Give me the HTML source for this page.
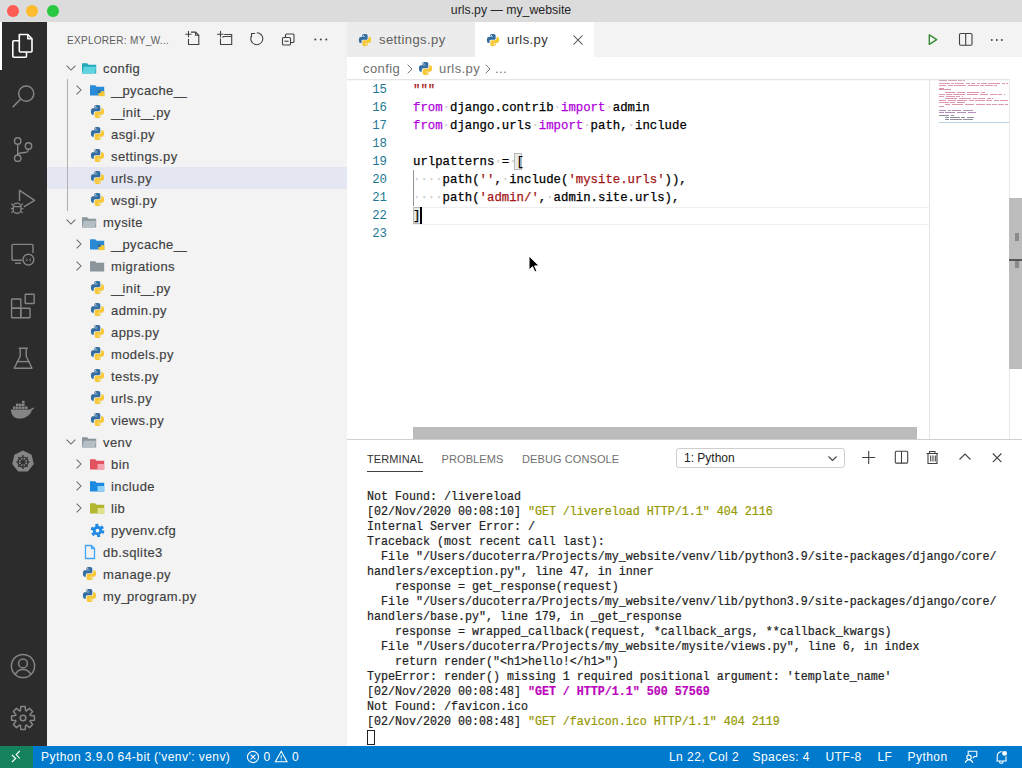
<!DOCTYPE html>
<html><head><meta charset="utf-8">
<style>
*{margin:0;padding:0;box-sizing:border-box}
html,body{width:1022px;height:768px;overflow:hidden;font-family:"Liberation Sans",sans-serif;background:#fff;position:relative}
div{position:absolute}
svg{position:absolute;overflow:visible}
.t{white-space:pre}
#title{left:0;top:0;width:1022px;height:22px;background:#dcdcdc}
#title .tx{left:0;width:1022px;top:3px;text-align:center;font-size:12.3px;color:#262626}
.light{width:11.6px;height:11.6px;border-radius:50%;top:5.2px}
#act{left:0;top:22px;width:47px;height:724px;background:#2c2c2c}
#side{left:47px;top:22px;width:300px;height:724px;background:#f3f3f3}
#editor{left:347px;top:22px;width:675px;height:417px;background:#fff}
#tabs{left:0;top:0;width:675px;height:35px;background:#f3f3f3}
#panel{left:347px;top:439px;width:675px;height:307px;background:#fff;border-top:1px solid #d0d0d0}
#status{left:0;top:746px;width:1022px;height:22px;background:#007acc;color:#fff;font-size:12px}
.row{left:0;width:300px;height:22px;font-size:13px;color:#3f3f3f;letter-spacing:.4px;-webkit-text-stroke:.15px}
.u{letter-spacing:-1.5px}
.lbl{top:4px;white-space:pre}
.code{-webkit-text-stroke:.25px;font-family:"Liberation Mono",monospace;font-size:12.33px;white-space:pre;color:#000;line-height:18px;height:18px}
.ln{font-family:"Liberation Mono",monospace;font-size:12.33px;white-space:pre;color:#237893;line-height:18px;height:18px;text-align:right;width:40px}
.term{-webkit-text-stroke:.2px;font-family:"Liberation Mono",monospace;font-size:11.67px;white-space:pre;color:#222;line-height:15px;height:15px;transform:scaleY(1.15);transform-origin:0 50%}
.kw{color:#af00db}.str{color:#a31515}
.ws{color:#d0d0d0}
.yl{color:#949800}.mg{color:#bc05bc;font-weight:bold}
.tab{font-size:13px;letter-spacing:.4px}
.bc{font-size:13px;color:#6f6f6f;letter-spacing:.4px}
.ptab{font-size:11px;letter-spacing:.1px}
.sb{top:4px;white-space:pre;letter-spacing:.45px}
</style></head><body>
<svg width="0" height="0" style="position:absolute"><defs><symbol id="py" viewBox="0 0 16 16"><path fill="#346ea0" d="M7.9 1C4.4 1 4.6 2.5 4.6 2.5v1.6H8v.5H3.2S1 4.3 1 7.9s1.9 3.5 1.9 3.5H4V9.7s-.1-1.9 1.9-1.9h3.3s1.8 0 1.8-1.8V3S11.3 1 7.9 1zM6.1 2.1a.6.6 0 1 1 0 1.2.6.6 0 0 1 0-1.2z"/><path fill="#f7c836" d="M8.1 15c3.5 0 3.3-1.5 3.3-1.5v-1.6H8v-.5h4.8S15 11.7 15 8.1s-1.9-3.5-1.9-3.5H12v1.7s.1 1.9-1.9 1.9H6.8S5 8.2 5 10v3s-.3 2 3.1 2zm1.8-1.1a.6.6 0 1 1 0-1.2.6.6 0 0 1 0 1.2z"/></symbol></defs></svg>
<div id="title">
<div class="light" style="left:7.2px;background:#fd5c55"></div>
<div class="light" style="left:26.4px;background:#fdbb2f"></div>
<div class="light" style="left:47.2px;background:#2ac840"></div>
<div class="tx t">urls.py — my_website</div>
</div>
<div id="act"></div>
<svg style="left:0;top:0" width="47" height="768" viewBox="0 0 47 768">
<rect x="0" y="22" width="2" height="48" fill="#fff"/>
<g fill="none" stroke="#fff" stroke-width="1.6" stroke-linejoin="round"><path d="M19.3 34.5h8.5l4.2 4.2v12.3a1 1 0 0 1-1 1H20.3a1 1 0 0 1-1-1z"/><path d="M27.8 34.5v4.2h4.2"/><path d="M19.3 40.8h-5.5a1 1 0 0 0-1 1v14.4a1 1 0 0 0 1 1h11.7a1 1 0 0 0 1-1v-4.2"/></g>
<g fill="none" stroke="#858585" stroke-width="1.5"><circle cx="26.2" cy="93.6" r="7.6"/><path d="M20.8 99l-7.6 7.6" stroke-linecap="round"/></g>
<g fill="none" stroke="#858585" stroke-width="1.4"><circle cx="17.7" cy="141" r="3.2"/><circle cx="28.5" cy="146" r="3.2"/><circle cx="17.7" cy="158.2" r="3.2"/><path d="M17.7 144.2v10.8"/><path d="M28.5 149.2c0 3.5-3 3.4-6.5 3.6c-2.5.2-4.3 1-4.3 3"/></g>
<g fill="none" stroke="#858585" stroke-width="1.4" stroke-linejoin="round"><path d="M19.5 201V190.3L34.6 200.3L23.8 206.9"/><path d="M13.2 207a3.9 3.9 0 0 1 7.8 0v2.4a3.9 3.9 0 0 1-7.8 0z"/><path d="M13.2 206.6h7.8M13.2 205l-1.9-1.3M13.2 208.6h-2.3M13.2 211.4l-1.9 1.5M21 205l1.9-1.3M21 208.6h2.3M21 211.4l1.9 1.5" stroke-width="1.2"/></g>
<g fill="none" stroke="#858585" stroke-width="1.4"><path d="M22 260.2H13a1 1 0 0 1-1-1V245.4a1 1 0 0 1 1-1h19a1 1 0 0 1 1 1V253"/><path d="M15 263.2h6"/><circle cx="28.4" cy="259.6" r="5.4"/><path d="M25.8 258.4l1.6 1.4-1.6 1.4M31 258.4l-1.6 1.4 1.6 1.4" stroke-width="1"/></g>
<g fill="none" stroke="#858585" stroke-width="1.4"><rect x="11.6" y="299" width="9.2" height="9.2" rx=".6"/><rect x="11.6" y="308.2" width="9.2" height="9.6" rx=".6"/><rect x="20.8" y="308.2" width="9.2" height="9.6" rx=".6"/><rect x="25.2" y="294.2" width="9" height="9.3" rx=".6"/></g>
<g fill="none" stroke="#858585" stroke-width="1.4" stroke-linejoin="round"><path d="M18.7 348.2h9.2M20.2 348.2v8L14.2 368.2h17.8L26.2 356.2v-8"/><path d="M16.5 361.6h13"/></g>
<g fill="#858585"><path d="M10.8 409.5h19.5c1.2-1.6 2.5-2 4-1.8c-.4 1-1.2 1.8-2.4 2.2c-1.6 5.4-6.5 8.7-12.5 8.7c-4.6 0-8-2.6-8.6-9.1z"/><rect x="13" y="406.5" width="2.6" height="2.4"/><rect x="16" y="406.5" width="2.6" height="2.4"/><rect x="19" y="406.5" width="2.6" height="2.4"/><rect x="22" y="406.5" width="2.6" height="2.4"/><rect x="25" y="406.5" width="2.6" height="2.4"/><rect x="16" y="403.6" width="2.6" height="2.4"/><rect x="19" y="403.6" width="2.6" height="2.4"/><rect x="22" y="403.6" width="2.6" height="2.4"/><rect x="22" y="400.8" width="2.6" height="2.4"/></g>
<path fill="#858585" d="M23 450.6l8.6 4.1 2.2 9.3-6 7.5h-9.6l-6-7.5 2.2-9.3z"/><g fill="none" stroke="#2c2c2c" stroke-width="1.2"><circle cx="23" cy="462" r="5"/><path d="M23 455v14M16.2 462h13.6M18.2 457.2l9.6 9.6M27.8 457.2l-9.6 9.6"/></g><circle cx="23" cy="462" r="1.6" fill="#2c2c2c"/>
<g fill="none" stroke="#858585" stroke-width="1.5"><circle cx="23" cy="666" r="11.6"/><circle cx="23" cy="663.4" r="4.4"/><path d="M15.2 674.6c1.4-3.4 4.2-5.2 7.8-5.2s6.4 1.8 7.8 5.2"/></g>
<g fill="none" stroke="#858585" stroke-width="1.5" stroke-linejoin="round"><path d="M30.35 715.40 L34.39 715.81 L34.39 720.19 L30.35 720.60 L30.04 721.36 L32.60 724.51 L29.51 727.60 L26.36 725.04 L25.60 725.35 L25.19 729.39 L20.81 729.39 L20.40 725.35 L19.64 725.04 L16.49 727.60 L13.40 724.51 L15.96 721.36 L15.65 720.60 L11.61 720.19 L11.61 715.81 L15.65 715.40 L15.96 714.64 L13.40 711.49 L16.49 708.40 L19.64 710.96 L20.40 710.65 L20.81 706.61 L25.19 706.61 L25.60 710.65 L26.36 710.96 L29.51 708.40 L32.60 711.49 L30.04 714.64Z"/><circle cx="23" cy="718" r="2.8"/></g>
</svg>
<div id="side">
<div class="t" style="left:20px;top:13px;font-size:10px;color:#5e5e5e;letter-spacing:.3px">EXPLORER: MY<span style="letter-spacing:-.5px">_</span>W...</div>
<svg style="left:0;top:0" width="300" height="35" viewBox="0 0 300 35"><g fill="none" stroke="#424242" stroke-width="1.1"><path d="M141.5 17v5.5h10.3v-9.2l-3.2-3.2h-4.6"/><path d="M148.6 10.1v3.2h3.2"/><path d="M138.3 12.3h6.2M141.5 9v6.2"/><path d="M173.5 16.5v6h11.2v-10h-7.5"/><path d="M170 12.3h6.5M173.5 9v6.5"/><path d="M175.5 15.5l1-1h8.2"/><path d="M209.8 10.7a6 6 0 1 1-5.2 3"/><path d="M204.5 15.2V11.5h3.6"/><rect x="235.5" y="15.5" width="8" height="7.5" rx="1"/><path d="M238.5 15.5v-2.5a1 1 0 0 1 1-1h6.5a1 1 0 0 1 1 1v6.5a1 1 0 0 1-1 1h-2.5"/><path d="M237.5 19.2h4"/></g><g fill="#424242"><circle cx="268.3" cy="17.5" r="1"/><circle cx="273.8" cy="17.5" r="1"/><circle cx="279.3" cy="17.5" r="1"/></g></svg>
<div class="row" style="top:35px">
<svg style="left:19px;top:8px" width="10" height="6" viewBox="0 0 10 6"><path d="M0.6 0.6l4.4 4.4 4.4-4.4" fill="none" stroke="#6a6a6a" stroke-width="1.05"/></svg>
<svg style="left:35px;top:6px" width="15" height="12" viewBox="0 0 15 12"><path fill="#23a9b8" d="M0 0.3h5.2l1.4 1.4H14.2V10.5H0z"/><path fill="#5fd3de" d="M1.8 3.8h12.4l-1.4 6.7H0z"/></svg>
<div class="lbl" style="left:56px">config</div>
</div>
<div class="row" style="top:57px">
<svg style="left:29px;top:6px" width="6" height="10" viewBox="0 0 6 10"><path d="M0.6 0.6l4.4 4.4-4.4 4.4" fill="none" stroke="#6a6a6a" stroke-width="1.05"/></svg>
<svg style="left:43px;top:6px" width="15" height="12" viewBox="0 0 15 12"><path fill="#2a8ad6" d="M0 0.3h5.2l1.4 1.4H14.2V10.5H0z"/><path fill="#f7c836" d="M8.5 6.2h6v5H8.5z"/><path fill="#346ea0" d="M7.5 5h3.2v3H7.5z"/></svg>
<div class="lbl" style="left:64px"><span class="u">_</span><span class="u">_</span>pycache<span class="u">_</span><span class="u">_</span></div>
</div>
<div class="row" style="top:79px">
<svg style="left:43px;top:3px" width="15" height="15" viewBox="0 0 16 16"><use href="#py"/></svg>
<div class="lbl" style="left:64px"><span class="u">_</span><span class="u">_</span>init<span class="u">_</span><span class="u">_</span>.py</div>
</div>
<div class="row" style="top:101px">
<svg style="left:43px;top:3px" width="15" height="15" viewBox="0 0 16 16"><use href="#py"/></svg>
<div class="lbl" style="left:64px">asgi.py</div>
</div>
<div class="row" style="top:123px">
<svg style="left:43px;top:3px" width="15" height="15" viewBox="0 0 16 16"><use href="#py"/></svg>
<div class="lbl" style="left:64px">settings.py</div>
</div>
<div style="left:0;top:145px;width:300px;height:22px;background:#e4e6f1"></div>
<div class="row" style="top:145px">
<svg style="left:43px;top:3px" width="15" height="15" viewBox="0 0 16 16"><use href="#py"/></svg>
<div class="lbl" style="left:64px">urls.py</div>
</div>
<div class="row" style="top:167px">
<svg style="left:43px;top:3px" width="15" height="15" viewBox="0 0 16 16"><use href="#py"/></svg>
<div class="lbl" style="left:64px">wsgi.py</div>
</div>
<div class="row" style="top:189px">
<svg style="left:19px;top:8px" width="10" height="6" viewBox="0 0 10 6"><path d="M0.6 0.6l4.4 4.4 4.4-4.4" fill="none" stroke="#6a6a6a" stroke-width="1.05"/></svg>
<svg style="left:35px;top:6px" width="15" height="12" viewBox="0 0 15 12"><path fill="#8a959c" d="M0 0.3h5.2l1.4 1.4H14.2V10.5H0z"/><path fill="#b5bec4" d="M1.8 3.8h12.4l-1.4 6.7H0z"/></svg>
<div class="lbl" style="left:56px">mysite</div>
</div>
<div class="row" style="top:211px">
<svg style="left:29px;top:6px" width="6" height="10" viewBox="0 0 6 10"><path d="M0.6 0.6l4.4 4.4-4.4 4.4" fill="none" stroke="#6a6a6a" stroke-width="1.05"/></svg>
<svg style="left:43px;top:6px" width="15" height="12" viewBox="0 0 15 12"><path fill="#2a8ad6" d="M0 0.3h5.2l1.4 1.4H14.2V10.5H0z"/><path fill="#f7c836" d="M8.5 6.2h6v5H8.5z"/><path fill="#346ea0" d="M7.5 5h3.2v3H7.5z"/></svg>
<div class="lbl" style="left:64px"><span class="u">_</span><span class="u">_</span>pycache<span class="u">_</span><span class="u">_</span></div>
</div>
<div class="row" style="top:233px">
<svg style="left:29px;top:6px" width="6" height="10" viewBox="0 0 6 10"><path d="M0.6 0.6l4.4 4.4-4.4 4.4" fill="none" stroke="#6a6a6a" stroke-width="1.05"/></svg>
<svg style="left:43px;top:6px" width="15" height="12" viewBox="0 0 15 12"><path fill="#8a959c" d="M0 0.3h5.2l1.4 1.4H14.2V10.5H0z"/></svg>
<div class="lbl" style="left:64px">migrations</div>
</div>
<div class="row" style="top:255px">
<svg style="left:43px;top:3px" width="15" height="15" viewBox="0 0 16 16"><use href="#py"/></svg>
<div class="lbl" style="left:64px"><span class="u">_</span><span class="u">_</span>init<span class="u">_</span><span class="u">_</span>.py</div>
</div>
<div class="row" style="top:277px">
<svg style="left:43px;top:3px" width="15" height="15" viewBox="0 0 16 16"><use href="#py"/></svg>
<div class="lbl" style="left:64px">admin.py</div>
</div>
<div class="row" style="top:299px">
<svg style="left:43px;top:3px" width="15" height="15" viewBox="0 0 16 16"><use href="#py"/></svg>
<div class="lbl" style="left:64px">apps.py</div>
</div>
<div class="row" style="top:321px">
<svg style="left:43px;top:3px" width="15" height="15" viewBox="0 0 16 16"><use href="#py"/></svg>
<div class="lbl" style="left:64px">models.py</div>
</div>
<div class="row" style="top:343px">
<svg style="left:43px;top:3px" width="15" height="15" viewBox="0 0 16 16"><use href="#py"/></svg>
<div class="lbl" style="left:64px">tests.py</div>
</div>
<div class="row" style="top:365px">
<svg style="left:43px;top:3px" width="15" height="15" viewBox="0 0 16 16"><use href="#py"/></svg>
<div class="lbl" style="left:64px">urls.py</div>
</div>
<div class="row" style="top:387px">
<svg style="left:43px;top:3px" width="15" height="15" viewBox="0 0 16 16"><use href="#py"/></svg>
<div class="lbl" style="left:64px">views.py</div>
</div>
<div class="row" style="top:409px">
<svg style="left:19px;top:8px" width="10" height="6" viewBox="0 0 10 6"><path d="M0.6 0.6l4.4 4.4 4.4-4.4" fill="none" stroke="#6a6a6a" stroke-width="1.05"/></svg>
<svg style="left:35px;top:6px" width="15" height="12" viewBox="0 0 15 12"><path fill="#8a959c" d="M0 0.3h5.2l1.4 1.4H14.2V10.5H0z"/><path fill="#b5bec4" d="M1.8 3.8h12.4l-1.4 6.7H0z"/></svg>
<div class="lbl" style="left:56px">venv</div>
</div>
<div class="row" style="top:431px">
<svg style="left:29px;top:6px" width="6" height="10" viewBox="0 0 6 10"><path d="M0.6 0.6l4.4 4.4-4.4 4.4" fill="none" stroke="#6a6a6a" stroke-width="1.05"/></svg>
<svg style="left:43px;top:6px" width="15" height="12" viewBox="0 0 15 12"><path fill="#e2525f" d="M0 0.3h5.2l1.4 1.4H14.2V10.5H0z"/><path fill="#f4a4b0" d="M7.5 5h6.7v5.5H7.5z"/></svg>
<div class="lbl" style="left:64px">bin</div>
</div>
<div class="row" style="top:453px">
<svg style="left:29px;top:6px" width="6" height="10" viewBox="0 0 6 10"><path d="M0.6 0.6l4.4 4.4-4.4 4.4" fill="none" stroke="#6a6a6a" stroke-width="1.05"/></svg>
<svg style="left:43px;top:6px" width="15" height="12" viewBox="0 0 15 12"><path fill="#1b8ae0" d="M0 0.3h5.2l1.4 1.4H14.2V10.5H0z"/><path fill="#8fd0f5" d="M7.5 5h6.7v5.5H7.5z"/></svg>
<div class="lbl" style="left:64px">include</div>
</div>
<div class="row" style="top:475px">
<svg style="left:29px;top:6px" width="6" height="10" viewBox="0 0 6 10"><path d="M0.6 0.6l4.4 4.4-4.4 4.4" fill="none" stroke="#6a6a6a" stroke-width="1.05"/></svg>
<svg style="left:43px;top:6px" width="15" height="12" viewBox="0 0 15 12"><path fill="#b2b630" d="M0 0.3h5.2l1.4 1.4H14.2V10.5H0z"/><path fill="#e0e38a" d="M7.5 5h6.7v5.5H7.5z"/></svg>
<div class="lbl" style="left:64px">lib</div>
</div>
<div class="row" style="top:497px">
<svg style="left:43px;top:4px" width="15" height="15" viewBox="0 0 16 16"><circle cx="8" cy="8" r="5.9" fill="none" stroke="#1e88e5" stroke-width="2.8" stroke-dasharray="3.2 3"/><circle cx="8" cy="8" r="5" fill="#1e88e5"/><circle cx="8" cy="8" r="2" fill="#f3f3f3"/></svg>
<div class="lbl" style="left:64px">pyvenv.cfg</div>
</div>
<div class="row" style="top:519px">
<svg style="left:35px;top:3px" width="16" height="16" viewBox="0 0 16 16"><path d="M3.5 1.5h6l3 3v10h-9z M9.5 1.5v3h3" fill="none" stroke="#42a5f5" stroke-width="1.3" stroke-linejoin="round"/></svg>
<div class="lbl" style="left:56px">db.sqlite3</div>
</div>
<div class="row" style="top:541px">
<svg style="left:35px;top:3px" width="15" height="15" viewBox="0 0 16 16"><use href="#py"/></svg>
<div class="lbl" style="left:56px">manage.py</div>
</div>
<div class="row" style="top:563px">
<svg style="left:35px;top:3px" width="15" height="15" viewBox="0 0 16 16"><use href="#py"/></svg>
<div class="lbl" style="left:56px">my<span class="u">_</span>program.py</div>
</div>
<div style="left:20px;top:57px;width:1px;height:132px;background:#b0b0b0"></div>
</div>
<div id="editor">
<div id="tabs">
<div style="left:0;top:0;width:128px;height:35px;background:#ececec"></div>
<div style="left:128px;top:0;width:119px;height:35px;background:#fff"></div>
<svg style="left:11px;top:11px" width="14" height="14" viewBox="0 0 16 16"><use href="#py"/></svg>
<div class="t tab" style="left:32px;top:10px;color:#616161">settings.py</div>
<svg style="left:139px;top:11px" width="14" height="14" viewBox="0 0 16 16"><use href="#py"/></svg>
<div class="t tab" style="left:160px;top:10px;color:#333">urls.py</div>
<svg style="left:226px;top:13px" width="10" height="10" viewBox="0 0 10 10"><path d="M0.5 0.5l9 9M9.5 0.5l-9 9" stroke="#424242" stroke-width="1.05"/></svg>
<svg style="left:0;top:0" width="675" height="35" viewBox="347 22 675 35"><path d="M929.3 34.8v9.6l7.4-4.8z" fill="none" stroke="#388a34" stroke-width="1.4" stroke-linejoin="round"/><rect x="959.5" y="33.5" width="12.5" height="11.8" rx="1.2" fill="none" stroke="#424242" stroke-width="1.1"/><path d="M965.7 33.5v11.8" stroke="#424242" stroke-width="1.1"/><g fill="#424242"><circle cx="991.8" cy="40" r=".95"/><circle cx="996.8" cy="40" r=".95"/><circle cx="1001.8" cy="40" r=".95"/></g></svg>
</div>
<div class="t bc" style="left:16px;top:39px">config</div>
<svg style="left:60px;top:42px" width="6" height="10" viewBox="0 0 6 10"><path d="M0.6 0.6l4.4 4.4-4.4 4.4" fill="none" stroke="#777" stroke-width="1"/></svg>
<svg style="left:71px;top:39px" width="15" height="15" viewBox="0 0 16 16"><use href="#py"/></svg>
<div class="t bc" style="left:92px;top:39px">urls.py</div>
<svg style="left:138px;top:42px" width="6" height="10" viewBox="0 0 6 10"><path d="M0.6 0.6l4.4 4.4-4.4 4.4" fill="none" stroke="#777" stroke-width="1"/></svg>
<div class="t bc" style="left:148px;top:39px">...</div>
<div style="left:0;top:57px;width:662px;height:2px;background:linear-gradient(#dcdcdc,#fff)"></div>
<div style="left:66px;top:185px;width:516px;height:18px;border-top:1px solid #eee;border-bottom:1px solid #eee"></div>
<div style="left:582px;top:58px;width:1px;height:359px;background:#e4e4e4"></div>
<div style="left:66px;top:148px;width:1px;height:36px;background:#939393"></div>
<div style="left:167px;top:131px;width:8px;height:17px;background:#e8ece8;border:1px solid #b9b9b9"></div>
<div style="left:66px;top:185px;width:8px;height:17px;background:#e8ece8;border:1px solid #b9b9b9"></div>
<div class="ln" style="left:0;top:59px;color:#237893">15</div>
<div class="code" style="left:66px;top:59px"><span class="str">"""</span></div>
<div class="ln" style="left:0;top:77px;color:#237893">16</div>
<div class="code" style="left:66px;top:77px"><span class="kw">from</span><span class="ws">·</span>django.contrib<span class="ws">·</span><span class="kw">import</span><span class="ws">·</span>admin</div>
<div class="ln" style="left:0;top:95px;color:#237893">17</div>
<div class="code" style="left:66px;top:95px"><span class="kw">from</span><span class="ws">·</span>django.urls<span class="ws">·</span><span class="kw">import</span><span class="ws">·</span>path,<span class="ws">·</span>include</div>
<div class="ln" style="left:0;top:113px;color:#237893">18</div>
<div class="code" style="left:66px;top:113px"></div>
<div class="ln" style="left:0;top:131px;color:#237893">19</div>
<div class="code" style="left:66px;top:131px">urlpatterns<span class="ws">·</span>=<span class="ws">·</span>[</div>
<div class="ln" style="left:0;top:149px;color:#237893">20</div>
<div class="code" style="left:66px;top:149px"><span class="ws">····</span>path(<span class="str">''</span>,<span class="ws">·</span>include(<span class="str">'mysite.urls'</span>)),</div>
<div class="ln" style="left:0;top:167px;color:#237893">21</div>
<div class="code" style="left:66px;top:167px"><span class="ws">····</span>path(<span class="str">'admin/'</span>,<span class="ws">·</span>admin.site.urls),</div>
<div class="ln" style="left:0;top:185px;color:#237893">22</div>
<div class="code" style="left:66px;top:185px">]</div>
<div class="ln" style="left:0;top:203px;color:#237893">23</div>
<div class="code" style="left:66px;top:203px"></div>
<div style="left:73px;top:185px;width:2px;height:17px;background:#000"></div>
<div style="left:592px;top:58px;width:8px;height:1px;background:#c98a9c;opacity:.75"></div>
<div style="left:601px;top:58px;width:9px;height:1px;background:#c98a9c;opacity:.75"></div>
<div style="left:611px;top:58px;width:4px;height:1px;background:#c98a9c;opacity:.75"></div>
<div style="left:616px;top:58px;width:2px;height:1px;background:#c98a9c;opacity:.75"></div>
<div style="left:592px;top:61px;width:11px;height:1px;background:#d27592;opacity:.75"></div>
<div style="left:604px;top:61px;width:3px;height:1px;background:#d27592;opacity:.75"></div>
<div style="left:608px;top:61px;width:9px;height:1px;background:#d27592;opacity:.75"></div>
<div style="left:619px;top:61px;width:4px;height:1px;background:#d27592;opacity:.75"></div>
<div style="left:624px;top:61px;width:4px;height:1px;background:#d27592;opacity:.75"></div>
<div style="left:630px;top:61px;width:3px;height:1px;background:#d27592;opacity:.75"></div>
<div style="left:634px;top:61px;width:6px;height:1px;background:#d27592;opacity:.75"></div>
<div style="left:641px;top:61px;width:12px;height:1px;background:#d27592;opacity:.75"></div>
<div style="left:655px;top:61px;width:3px;height:1px;background:#d27592;opacity:.75"></div>
<div style="left:659px;top:61px;width:2px;height:1px;background:#d27592;opacity:.75"></div>
<div style="left:592px;top:63px;width:7px;height:1px;background:#d27592;opacity:.75"></div>
<div style="left:601px;top:63px;width:5px;height:1px;background:#d27592;opacity:.75"></div>
<div style="left:607px;top:63px;width:12px;height:1px;background:#d27592;opacity:.75"></div>
<div style="left:621px;top:63px;width:11px;height:1px;background:#d27592;opacity:.75"></div>
<div style="left:633px;top:63px;width:4px;height:1px;background:#d27592;opacity:.75"></div>
<div style="left:638px;top:63px;width:8px;height:1px;background:#d27592;opacity:.75"></div>
<div style="left:647px;top:63px;width:3px;height:1px;background:#d27592;opacity:.75"></div>
<div style="left:592px;top:66px;width:5px;height:1px;background:#d27592;opacity:.75"></div>
<div style="left:592px;top:67px;width:12px;height:1px;background:#d27592;opacity:.75"></div>
<div style="left:598px;top:70px;width:10px;height:1px;background:#d27592;opacity:.75"></div>
<div style="left:610px;top:70px;width:8px;height:1px;background:#d27592;opacity:.75"></div>
<div style="left:620px;top:70px;width:12px;height:1px;background:#d27592;opacity:.75"></div>
<div style="left:634px;top:70px;width:4px;height:1px;background:#d27592;opacity:.75"></div>
<div style="left:592px;top:72px;width:6px;height:1px;background:#d27592;opacity:.75"></div>
<div style="left:599px;top:72px;width:6px;height:1px;background:#d27592;opacity:.75"></div>
<div style="left:606px;top:72px;width:12px;height:1px;background:#d27592;opacity:.75"></div>
<div style="left:620px;top:72px;width:11px;height:1px;background:#d27592;opacity:.75"></div>
<div style="left:633px;top:72px;width:8px;height:1px;background:#d27592;opacity:.75"></div>
<div style="left:643px;top:72px;width:7px;height:1px;background:#d27592;opacity:.75"></div>
<div style="left:651px;top:72px;width:4px;height:1px;background:#d27592;opacity:.75"></div>
<div style="left:657px;top:72px;width:1px;height:1px;background:#d27592;opacity:.75"></div>
<div style="left:592px;top:74px;width:5px;height:1px;background:#d27592;opacity:.75"></div>
<div style="left:599px;top:74px;width:9px;height:1px;background:#d27592;opacity:.75"></div>
<div style="left:609px;top:74px;width:4px;height:1px;background:#d27592;opacity:.75"></div>
<div style="left:615px;top:74px;width:1px;height:1px;background:#d27592;opacity:.75"></div>
<div style="left:598px;top:76px;width:12px;height:1px;background:#d27592;opacity:.75"></div>
<div style="left:612px;top:76px;width:12px;height:1px;background:#d27592;opacity:.75"></div>
<div style="left:626px;top:76px;width:4px;height:1px;background:#d27592;opacity:.75"></div>
<div style="left:631px;top:76px;width:7px;height:1px;background:#d27592;opacity:.75"></div>
<div style="left:640px;top:76px;width:4px;height:1px;background:#d27592;opacity:.75"></div>
<div style="left:645px;top:76px;width:1px;height:1px;background:#d27592;opacity:.75"></div>
<div style="left:592px;top:78px;width:7px;height:1px;background:#d27592;opacity:.75"></div>
<div style="left:601px;top:78px;width:8px;height:1px;background:#d27592;opacity:.75"></div>
<div style="left:610px;top:78px;width:10px;height:1px;background:#d27592;opacity:.75"></div>
<div style="left:622px;top:78px;width:5px;height:1px;background:#d27592;opacity:.75"></div>
<div style="left:628px;top:78px;width:10px;height:1px;background:#d27592;opacity:.75"></div>
<div style="left:639px;top:78px;width:6px;height:1px;background:#d27592;opacity:.75"></div>
<div style="left:647px;top:78px;width:5px;height:1px;background:#d27592;opacity:.75"></div>
<div style="left:653px;top:78px;width:8px;height:1px;background:#d27592;opacity:.75"></div>
<div style="left:592px;top:80px;width:10px;height:1px;background:#d27592;opacity:.75"></div>
<div style="left:603px;top:80px;width:5px;height:1px;background:#d27592;opacity:.75"></div>
<div style="left:610px;top:80px;width:8px;height:1px;background:#d27592;opacity:.75"></div>
<div style="left:598px;top:82px;width:5px;height:1px;background:#d27592;opacity:.75"></div>
<div style="left:605px;top:82px;width:11px;height:1px;background:#d27592;opacity:.75"></div>
<div style="left:618px;top:82px;width:9px;height:1px;background:#d27592;opacity:.75"></div>
<div style="left:629px;top:82px;width:9px;height:1px;background:#d27592;opacity:.75"></div>
<div style="left:639px;top:82px;width:5px;height:1px;background:#d27592;opacity:.75"></div>
<div style="left:645px;top:82px;width:5px;height:1px;background:#d27592;opacity:.75"></div>
<div style="left:651px;top:82px;width:6px;height:1px;background:#d27592;opacity:.75"></div>
<div style="left:658px;top:82px;width:3px;height:1px;background:#d27592;opacity:.75"></div>
<div style="left:592px;top:84px;width:5px;height:1px;background:#d27592;opacity:.75"></div>
<div style="left:592px;top:88px;width:7px;height:1px;background:#9a6aa8;opacity:.75"></div>
<div style="left:601px;top:88px;width:3px;height:1px;background:#9a6aa8;opacity:.75"></div>
<div style="left:605px;top:88px;width:9px;height:1px;background:#9a6aa8;opacity:.75"></div>
<div style="left:616px;top:88px;width:10px;height:1px;background:#9a6aa8;opacity:.75"></div>
<div style="left:592px;top:90px;width:5px;height:1px;background:#9a6aa8;opacity:.75"></div>
<div style="left:598px;top:90px;width:10px;height:1px;background:#9a6aa8;opacity:.75"></div>
<div style="left:610px;top:90px;width:9px;height:1px;background:#9a6aa8;opacity:.75"></div>
<div style="left:621px;top:90px;width:8px;height:1px;background:#9a6aa8;opacity:.75"></div>
<div style="left:592px;top:93px;width:10px;height:1px;background:#6c6c7c;opacity:.75"></div>
<div style="left:604px;top:93px;width:3px;height:1px;background:#6c6c7c;opacity:.75"></div>
<div style="left:598px;top:95px;width:4px;height:1px;background:#6c6c7c;opacity:.75"></div>
<div style="left:603px;top:95px;width:10px;height:1px;background:#6c6c7c;opacity:.75"></div>
<div style="left:614px;top:95px;width:4px;height:1px;background:#6c6c7c;opacity:.75"></div>
<div style="left:620px;top:95px;width:7px;height:1px;background:#6c6c7c;opacity:.75"></div>
<div style="left:598px;top:97px;width:4px;height:1px;background:#6c6c7c;opacity:.75"></div>
<div style="left:603px;top:97px;width:12px;height:1px;background:#6c6c7c;opacity:.75"></div>
<div style="left:616px;top:97px;width:10px;height:1px;background:#6c6c7c;opacity:.75"></div>
<div style="left:592px;top:100px;width:70px;height:1px;background:#b8d0e0"></div>
<div style="left:662px;top:57px;width:1px;height:360px;background:#e8e8e8"></div>
<div style="left:662px;top:176px;width:13px;height:171px;background:#bcbcbc"></div>
<div style="left:668px;top:211px;width:4px;height:8px;background:#8a8a8a"></div>
<div style="left:662px;top:237px;width:13px;height:2px;background:#555"></div>
<div style="left:668px;top:239px;width:4px;height:7px;background:#8a8a8a"></div>
<div style="left:66px;top:405px;width:504px;height:12px;background:#bcbcbc"></div>
</div>
<svg style="left:528px;top:255px" width="12" height="18" viewBox="0 0 12 18"><path d="M1 1v14l3.5-3.3 2.4 5.3 2-1-2.3-5.1h4.6z" fill="#000" stroke="#fff" stroke-width="1"/></svg>
<div id="panel">
<div class="t ptab" style="left:20px;top:13px;color:#333">TERMINAL</div>
<div style="left:20px;top:31px;width:56px;height:1px;background:#424242"></div>
<div class="t ptab" style="left:94.5px;top:13px;color:#6f6f6f">PROBLEMS</div>
<div class="t ptab" style="left:175px;top:13px;color:#6f6f6f">DEBUG CONSOLE</div>
<div style="left:329px;top:8px;width:169px;height:20px;border:1px solid #cecece;border-radius:3px;background:#fff"></div>
<div class="t" style="left:337px;top:11px;font-size:12px;color:#222;letter-spacing:0">1: Python</div>
<svg style="left:481px;top:16px" width="9" height="5" viewBox="0 0 9 5"><path d="M0.5 0.5l4 4 4-4" fill="none" stroke="#424242" stroke-width="1.1"/></svg>
<svg style="left:0;top:-1.5px" width="675" height="40" viewBox="347 439 675 40"><g fill="none" stroke="#424242" stroke-width="1.1"><path d="M868.7 451v13M862.2 457.5h13"/><rect x="895.3" y="451.3" width="12.4" height="11.8" rx="1"/><path d="M901.5 451.3v11.8"/><path d="M926.5 453.5h11.5M929.5 453.5v-2h5.5v2M928 453.5v10h9v-10M930.7 455.5v6M933 455.5v6M935.3 455.5v6"/><path d="M959.5 459.5l5.5-5.5 5.5 5.5"/><path d="M992.8 453.5l8.6 8.6M1001.4 453.5l-8.6 8.6"/></g></svg>
<div class="term" style="left:20px;top:49.5px">Not Found: /livereload</div>
<div class="term" style="left:20px;top:64.5px">[02/Nov/2020 00:08:10] <span class="yl">"GET /livereload HTTP/1.1" 404 2116</span></div>
<div class="term" style="left:20px;top:79.5px">Internal Server Error: /</div>
<div class="term" style="left:20px;top:94.5px">Traceback (most recent call last):</div>
<div class="term" style="left:20px;top:109.5px">  File "/Users/ducoterra/Projects/my_website/venv/lib/python3.9/site-packages/django/core/</div>
<div class="term" style="left:20px;top:124.5px">handlers/exception.py", line 47, in inner</div>
<div class="term" style="left:20px;top:139.5px">    response = get_response(request)</div>
<div class="term" style="left:20px;top:154.5px">  File "/Users/ducoterra/Projects/my_website/venv/lib/python3.9/site-packages/django/core/</div>
<div class="term" style="left:20px;top:169.5px">handlers/base.py", line 179, in _get_response</div>
<div class="term" style="left:20px;top:184.5px">    response = wrapped_callback(request, *callback_args, **callback_kwargs)</div>
<div class="term" style="left:20px;top:199.5px">  File "/Users/ducoterra/Projects/my_website/mysite/views.py", line 6, in index</div>
<div class="term" style="left:20px;top:214.5px">    return render("&lt;h1&gt;hello!&lt;/h1&gt;")</div>
<div class="term" style="left:20px;top:229.5px">TypeError: render() missing 1 required positional argument: 'template_name'</div>
<div class="term" style="left:20px;top:244.5px">[02/Nov/2020 00:08:48] <span class="mg">"GET / HTTP/1.1" 500 57569</span></div>
<div class="term" style="left:20px;top:259.5px">Not Found: /favicon.ico</div>
<div class="term" style="left:20px;top:274.5px">[02/Nov/2020 00:08:48] <span class="yl">"GET /favicon.ico HTTP/1.1" 404 2119</span></div>
<div style="left:20px;top:290px;width:7.5px;height:15px;border:1px solid #222"></div>
</div>
<div id="status">
<div style="left:0;top:0;width:33px;height:22px;background:#16825d"></div>
<svg style="left:0;top:0" width="1022" height="22" viewBox="0 746 1022 22"><g fill="none" stroke="#fff" stroke-width="1.1"><path d="M11.9 755l3.8 3.5-3.8 3.5M19.8 751l-3.6 3.6 3.6 3.9"/><circle cx="253" cy="757" r="5.6"/><path d="M250.6 754.6l4.8 4.8M255.4 754.6l-4.8 4.8"/><path d="M281.2 751.3l5.8 10.5h-11.6z"/><path d="M281.2 755.3v3.2M281.2 759.6v.8" stroke-width="1"/><path d="M968.2 754.8v-3.5h8.6v5.2h-2.5l-1.6 1.6"/><circle cx="969" cy="757.3" r="2.2"/><path d="M965.2 762.8c.6-2 2-3.2 3.8-3.2s3.2 1.2 3.8 3.2"/><path d="M996.3 761h10.4M997.2 761v-5a4.3 4.3 0 0 1 5-4.2M1006 756.5v4.5M999.5 761.5a1.8 1.8 0 0 0 3.6 0"/></g><circle cx="1004.6" cy="753.4" r="2.4" fill="#fff"/></svg>
<div class="sb" style="left:41px">Python 3.9.0 64-bit ('venv': venv)</div>
<div class="sb" style="left:263.5px">0</div>
<div class="sb" style="left:292px">0</div>
<div class="sb" style="left:669px">Ln 22, Col 2</div>
<div class="sb" style="left:752.5px">Spaces: 4</div>
<div class="sb" style="left:825.5px">UTF-8</div>
<div class="sb" style="left:877.5px">LF</div>
<div class="sb" style="left:907.5px">Python</div>
</div>
</body></html>
